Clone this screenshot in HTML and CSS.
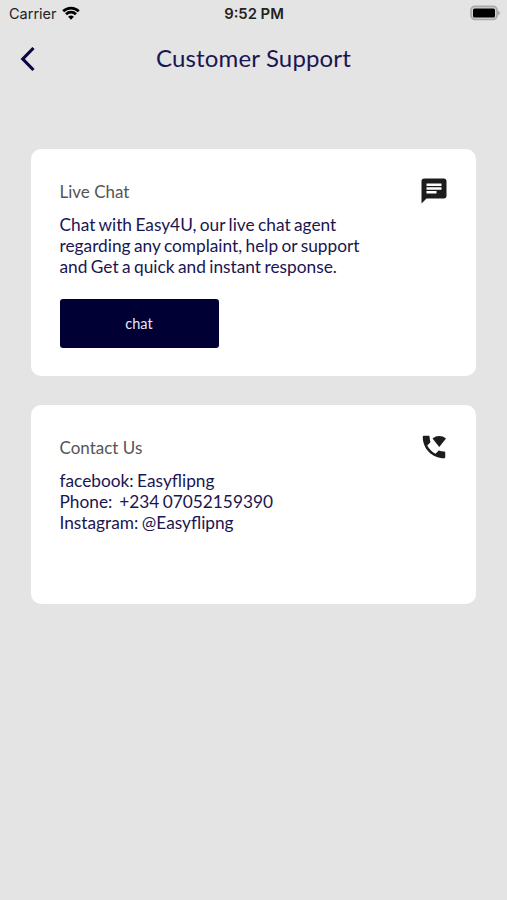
FILE: index.html
```html
<!DOCTYPE html>
<html lang="en">
<head>
  <meta charset="UTF-8">
  <title>Customer Support</title>
  <link rel="stylesheet" href="styles.css">
</head>
<body>
  <div class="status-bar">
    <div class="carrier">
      <span>Carrier</span>
      <svg class="wifi" viewBox="0 0 18 14">
        <path d="M1.2 5.2a11.3 11.3 0 0 1 15.6 0M4 8.2a7.2 7.2 0 0 1 10 0" fill="none" stroke="#000" stroke-width="2.7"/>
        <path d="M9 13.8L6.1 10.8a4.2 4.2 0 0 1 5.8 0z"/>
      </svg>
    </div>
    <div class="time">9:52 PM</div>
    <div class="status-right">
      <svg class="battery" viewBox="0 0 31 16">
        <path d="M27.5 5l3 3-3 3z" fill="#aaa"/>
        <rect x="1" y="1.3" width="26" height="13.2" rx="4" fill="#d2d2d2" stroke="#a9a9a9" stroke-width="1.7"/>
        <rect x="3" y="3.5" width="22" height="9" rx="1.5"/>
      </svg>
    </div>
  </div>

  <header class="header">
    <svg class="back" viewBox="0 0 16 26">
      <path d="M13.5 2L2.8 13 13.5 24" fill="none" stroke="#0b0743" stroke-width="3.2"/>
    </svg>
    <h1>Customer Support</h1>
  </header>

  <main class="cards">
    <section class="card chat-card">
      <div class="card-head">
        <h2>Live Chat</h2>
        <svg class="icon" viewBox="0 0 24 24">
          <path d="M20 2H4c-1.1 0-1.99.9-1.99 2L2 22l4-4h14c1.1 0 2-.9 2-2V4c0-1.1-.9-2-2-2zM6 9h12v2H6V9zm8 5H6v-2h8v2zm4-6H6V6h12v2z"/>
        </svg>
      </div>
      <p>Chat with Easy4U, our live chat agent<br>regarding any complaint, help or support<br>and Get a quick and instant response.</p>
      <button class="chat-btn">chat</button>
    </section>

    <section class="card contact-card">
      <div class="card-head">
        <h2>Contact Us</h2>
        <svg class="icon" viewBox="0 0 24 24">
          <path d="M20 15.5c-1.25 0-2.45-.2-3.57-.57-.35-.11-.74-.03-1.02.24l-2.2 2.2c-2.83-1.44-5.14-3.75-6.59-6.58l2.2-2.21c.28-.27.36-.66.25-1.01C8.7 6.45 8.5 5.25 8.5 4c0-.55-.45-1-1-1H4c-.55 0-1 .45-1 1 0 9.39 7.61 17 17 17 .55 0 1-.45 1-1v-3.5c0-.55-.45-1-1-1z"/>
          <path d="M16.2 12L10.8 5.1a8.7 8.7 0 0 1 10.8 0z"/>
        </svg>
      </div>
      <p>facebook: Easyflipng<br>Phone:&nbsp; +234 07052159390<br>Instagram: @Easyflipng</p>
    </section>
  </main>
</body>
</html>
```

FILE: styles.css
```css
body {
  margin: 0;
  min-height: 100vh;
  background-color: #e4e4e4;
  font-family: Lato, sans-serif;
  color: #1a1652;
}
.status-bar {
  display: grid;
  grid-template-columns: 1fr auto 1fr;
  align-items: center;
  height: 27px;
  padding: 0 6px 0 9px;
  font-family: Inter, sans-serif;
  font-size: 14.5px;
  color: #222;
}
.carrier {
  display: flex;
  align-items: center;
  gap: 5px;
}
.wifi {
  width: 18px;
  height: 14px;
  margin-bottom: 2px;
}
.time {
  margin-right: 2px;
  font-size: 14.8px;
  font-weight: 600;
}
.status-right {
  display: flex;
  justify-content: flex-end;
  padding-bottom: 1px;
}
.battery {
  width: 31px;
  height: 16px;
}
.header {
  display: grid;
  grid-template-columns: 16px 1fr 16px;
  align-items: center;
  height: 64px;
  padding: 0 20px;
}
.back {
  width: 16px;
  height: 26px;
}
h1 {
  margin: 0 0 3px;
  font-size: 24px;
  font-weight: 400;
  letter-spacing: 0.15px;
  text-align: center;
}
.cards {
  display: flex;
  flex-direction: column;
  gap: 29px;
  padding: 58px 31px 0;
}
.card {
  box-sizing: border-box;
  padding: 27px 27px 0 28.5px;
  background: white;
  border-radius: 10px;
}
.chat-card {
  height: 227px;
}
.contact-card {
  height: 199px;
}
.card-head {
  display: flex;
  justify-content: space-between;
  align-items: center;
  height: 30px;
}
h2 {
  margin: 1px 0 0;
  font-size: 17px;
  font-weight: 400;
  color: #555;
}
.icon {
  width: 30px;
  height: 30px;
  fill: #1c1c1c;
}
p {
  margin: 9px 0 0;
  font-size: 17.3px;
  line-height: 20.8px;
  word-spacing: -1px;
}
.chat-btn {
  display: block;
  width: 159px;
  height: 49px;
  margin-top: 22px;
  padding: 0;
  border: none;
  border-radius: 3px;
  background-color: #000035;
  color: #e8e8f4;
  font-family: Lato, sans-serif;
  font-size: 14.5px;
}
```
